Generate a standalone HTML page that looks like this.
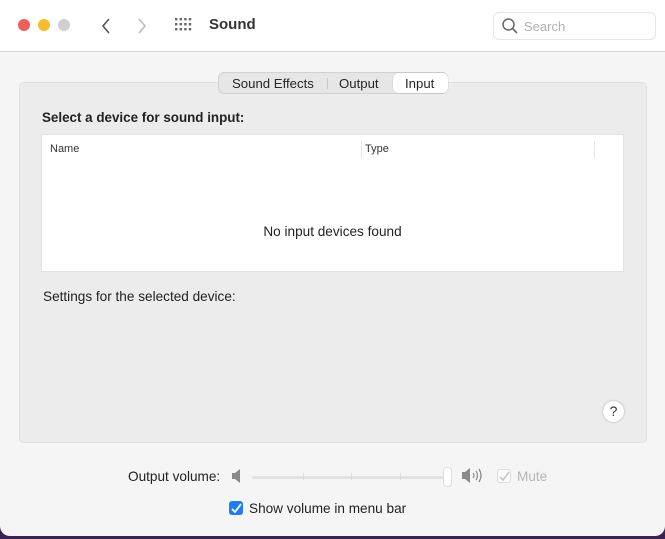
<!DOCTYPE html>
<html><head><meta charset="utf-8"><style>
*{box-sizing:border-box;margin:0;padding:0}
body{width:665px;height:539px;background:#3a2350;font-family:"Liberation Sans",sans-serif;overflow:hidden;position:relative}
.win{position:absolute;left:0;top:0;width:665px;height:536px;background:#f5f5f5;border-radius:0 0 10px 10px;overflow:hidden}
.tb{position:absolute;left:0;top:0;width:665px;height:52px;background:#fff;border-bottom:1px solid #d6d6d6}
.dot{position:absolute;top:19px;width:12px;height:12px;border-radius:50%}
.t{position:absolute;white-space:nowrap}
.panel{position:absolute;left:19px;top:82px;width:628px;height:361px;background:#ececec;border:1px solid #e0e0e0;border-radius:5px}
.seg{position:absolute;left:218px;top:72px;width:230px;height:22px;background:#e6e6e6;border:1px solid #d2d2d2;border-radius:6px;font-size:13.2px;color:#262626}
.table{position:absolute;left:41px;top:134px;width:583px;height:138px;background:#fff;border:1px solid #e3e3e3}
</style></head><body>
<div class="win">
<div class="tb">
<div class="dot" style="left:18px;background:#ed5f57"></div>
<div class="dot" style="left:38px;background:#f5bd2f"></div>
<div class="dot" style="left:58px;background:#d0d0d0"></div>
<svg style="position:absolute;left:100px;top:17px" width="12" height="18"><path d="M9 2 L3 9 L9 16" stroke="#555" stroke-width="1.6" fill="none"/></svg>
<svg style="position:absolute;left:136px;top:17px" width="12" height="18"><path d="M3 2 L9 9 L3 16" stroke="#bbb" stroke-width="1.6" fill="none"/></svg>
<svg style="position:absolute;left:175px;top:18px" width="20" height="16" fill="#666">
<g><rect x="0" y="0" width="2.4" height="2.4"/><rect x="4.6" y="0" width="2.4" height="2.4"/><rect x="9.2" y="0" width="2.4" height="2.4"/><rect x="13.8" y="0" width="2.4" height="2.4"/>
<rect x="0" y="5" width="2.4" height="2.4"/><rect x="4.6" y="5" width="2.4" height="2.4"/><rect x="9.2" y="5" width="2.4" height="2.4"/><rect x="13.8" y="5" width="2.4" height="2.4"/>
<rect x="0" y="10" width="2.4" height="2.4"/><rect x="4.6" y="10" width="2.4" height="2.4"/><rect x="9.2" y="10" width="2.4" height="2.4"/><rect x="13.8" y="10" width="2.4" height="2.4"/></g></svg>
<div class="t" style="left:209px;top:16px;font-size:15px;font-weight:bold;color:#333">Sound</div>
<div style="position:absolute;left:493px;top:12px;width:163px;height:28px;border:1px solid #e6e6e6;border-radius:6px;background:#fff"></div>
<svg style="position:absolute;left:501px;top:17px" width="18" height="18"><circle cx="7.5" cy="7.5" r="5.5" stroke="#666" stroke-width="1.5" fill="none"/><path d="M11.5 11.5 L16 16" stroke="#666" stroke-width="1.6"/></svg>
<div class="t" style="left:524px;top:19px;font-size:13px;color:#b0b0b0">Search</div>
</div>
<div class="panel"></div>
<div class="seg">
<div class="t" style="left:13px;top:3px">Sound Effects</div>
<div style="position:absolute;left:108px;top:5px;width:1px;height:11px;background:#c8c8c8"></div>
<div class="t" style="left:120px;top:3px">Output</div>
<div style="position:absolute;left:174px;top:0px;width:55px;height:20px;background:#fff;border-radius:5px;box-shadow:0 0 1px rgba(0,0,0,.3)"></div>
<div class="t" style="left:186px;top:3px">Input</div>
</div>
<div class="t" style="left:42px;top:110px;font-size:13.4px;font-weight:bold;color:#222">Select a device for sound input:</div>
<div class="table">
<div class="t" style="left:8px;top:8px;font-size:11px;color:#333">Name</div>
<div style="position:absolute;left:319px;top:6px;width:1px;height:17px;background:#e6e6e6"></div>
<div class="t" style="left:323px;top:8px;font-size:11px;color:#333">Type</div>
<div style="position:absolute;left:552px;top:6px;width:1px;height:17px;background:#e6e6e6"></div>
<div class="t" style="left:0;width:581px;text-align:center;top:89px;font-size:13.6px;color:#222">No input devices found</div>
</div>
<div class="t" style="left:43px;top:289px;font-size:13.6px;color:#222">Settings for the selected device:</div>
<div style="position:absolute;left:603px;top:401px;width:21px;height:21px;border-radius:50%;background:#fff;box-shadow:0 0 2px rgba(0,0,0,.3);text-align:center;font-size:14px;line-height:21px;color:#333">?</div>
<div class="t" style="left:128px;top:469px;font-size:13.6px;color:#222">Output volume:</div>
<svg style="position:absolute;left:231px;top:469px" width="12" height="14"><path d="M1 4 H4 L9 0 V14 L4 10 H1 Z" fill="#8a8a8a"/></svg>
<div style="position:absolute;left:252px;top:476px;width:196px;height:3px;background:#e3e3e3;border-radius:2px"></div>
<div style="position:absolute;left:303px;top:473px;width:1px;height:7px;background:#ddd"></div>
<div style="position:absolute;left:351px;top:473px;width:1px;height:7px;background:#ddd"></div>
<div style="position:absolute;left:400px;top:473px;width:1px;height:7px;background:#ddd"></div>
<div style="position:absolute;left:443px;top:467px;width:9px;height:20px;background:#fff;border:1px solid #ddd;border-radius:4px"></div>
<svg style="position:absolute;left:461px;top:467px" width="24" height="18"><path d="M1 5 H4 L9 1 V16 L4 12 H1 Z" fill="#8a8a8a"/><path d="M12 6 Q14 8.5 12 11 M15 4 Q18 8.5 15 13 M18 2 Q22 8.5 18 15" stroke="#8a8a8a" stroke-width="1.2" fill="none"/></svg>
<div style="position:absolute;left:497px;top:469px;width:14px;height:14px;border:1px solid #ddd;border-radius:3px;background:#fafafa"></div>
<svg style="position:absolute;left:499px;top:471px" width="11" height="11"><path d="M1 6 L4 9 L10 1" stroke="#c4c4c4" stroke-width="1.5" fill="none"/></svg>
<div class="t" style="left:517px;top:469px;font-size:13.6px;color:#b5b5b5">Mute</div>
<div style="position:absolute;left:229px;top:501px;width:14px;height:14px;border-radius:3px;background:#1f7cf2"></div>
<svg style="position:absolute;left:231px;top:503px" width="11" height="11"><path d="M1 6 L4 9 L10 1" stroke="#fff" stroke-width="1.8" fill="none"/></svg>
<div class="t" style="left:249px;top:501px;font-size:13.6px;color:#222">Show volume in menu bar</div>
</div>
</body></html>
